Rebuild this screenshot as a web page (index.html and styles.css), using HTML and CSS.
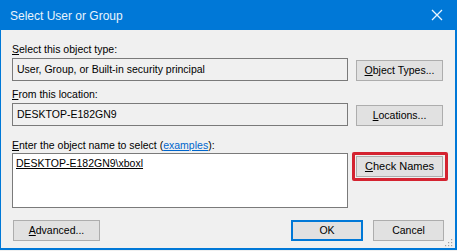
FILE: index.html
```html
<!DOCTYPE html>
<html>
<head>
<meta charset="utf-8">
<link rel="stylesheet" href="styles.css">
</head>
<body>
<div class="window">
  <div class="titlebar">
    <span class="title">Select User or Group</span>
    <svg class="close" width="12" height="12" viewBox="0 0 12 12"><path d="M1 1 L11 11 M11 1 L1 11" stroke="#eaf5ff" stroke-width="1.3" fill="none"/></svg>
  </div>
  <div class="content">
    <div class="label"><u>S</u>elect this object type:</div>
    <div class="row">
      <div class="field">User, Group, or Built-in security principal</div>
      <div class="btn"><u>O</u>bject Types...</div>
    </div>
    <div class="label label-2"><u>F</u>rom this location:</div>
    <div class="row">
      <div class="field">DESKTOP-E182GN9</div>
      <div class="btn"><u>L</u>ocations...</div>
    </div>
    <div class="label label-3"><u>E</u>nter the object name to select (<span class="link">examples</span>):</div>
    <div class="row row-top">
      <div class="textarea"><u>DESKTOP-E182GN9\xboxl</u></div>
      <div class="highlight"><div class="btn"><u>C</u>heck Names</div></div>
    </div>
    <div class="footer">
      <div class="btn btn-adv"><u>A</u>dvanced...</div>
      <div class="spacer"></div>
      <div class="btn btn-ok">OK</div>
      <div class="btn btn-cancel">Cancel</div>
    </div>
  </div>
  <svg class="grip" width="8" height="8" viewBox="0 0 8 8" fill="#a0a0a0"><rect x="6" y="0" width="1.2" height="1.2"/><rect x="3" y="3" width="1.2" height="1.2"/><rect x="6" y="3" width="1.2" height="1.2"/><rect x="0" y="6" width="1.2" height="1.2"/><rect x="3" y="6" width="1.2" height="1.2"/><rect x="6" y="6" width="1.2" height="1.2"/></svg>
</div>
</body>
</html>
```

FILE: styles.css
```css
html, body {
  margin: 0;
  padding: 0;
  background: #f0f0f0;
}
body {
  width: 457px;
  height: 251px;
  overflow: hidden;
  font-family: "Liberation Sans", Arial, sans-serif;
  font-size: 10.5px;
  color: #000;
}
.window {
  position: relative;
  box-sizing: border-box;
  width: 457px;
  height: 250px;
  border-left: 1px solid #0078d7;
  border-right: 2px solid #0078d7;
  border-bottom: 2px solid #0078d7;
  background: #f0f0f0;
  display: flex;
  flex-direction: column;
}
.titlebar {
  height: 30px;
  margin-left: -1px;
  margin-right: -2px;
  background: #0078d7;
  display: flex;
  align-items: center;
  padding: 0 10px 0 10px;
  flex: none;
}
.title {
  color: #e8f4fc;
  font-size: 12px;
  flex: 1;
  padding-top: 1px;
}
.close {
  margin-right: 4px;
}
.content {
  padding: 12px 11px 0 11px;
  display: flex;
  flex-direction: column;
}
.label {
  height: 14px;
  line-height: 14px;
  margin-bottom: 2px;
}
.label-2 {
  margin-top: 6px;
}
.label-3 {
  margin-top: 12px;
  margin-bottom: 1px;
}
.link {
  color: #0066cc;
  text-decoration: underline;
}
.row {
  display: flex;
  align-items: flex-end;
  gap: 8px;
}
.row-top {
  align-items: flex-start;
}
.field {
  box-sizing: border-box;
  width: 336px;
  height: 23px;
  border: 1px solid #7a7a7a;
  line-height: 21px;
  padding-left: 4px;
}
.textarea {
  box-sizing: border-box;
  width: 336px;
  height: 55px;
  border: 1px solid #7a7a7a;
  background: #fff;
  padding: 2px 0 0 3px;
  line-height: 14px;
}
.btn {
  box-sizing: border-box;
  width: 87px;
  height: 21px;
  border: 1px solid #adadad;
  background: #e1e1e1;
  text-align: center;
  line-height: 19px;
}
.highlight {
  position: relative;
  margin-top: 3px;
}
.highlight::after {
  content: "";
  position: absolute;
  left: -4px;
  right: -5px;
  top: -4px;
  bottom: -4px;
  border: 3px solid #d42330;
  border-radius: 2px;
}
.highlight .btn {
  font-size: 11px;
}
.footer {
  display: flex;
  margin-top: 12px;
}
.btn-adv {
  margin-left: 1px;
}
.spacer {
  flex: 1;
}
.btn-ok {
  width: 72px;
  border: 2px solid #0078d7;
  line-height: 17px;
}
.btn-cancel {
  width: 71px;
  margin-left: 10px;
}
.grip {
  position: absolute;
  right: 2px;
  bottom: 1px;
}
```
